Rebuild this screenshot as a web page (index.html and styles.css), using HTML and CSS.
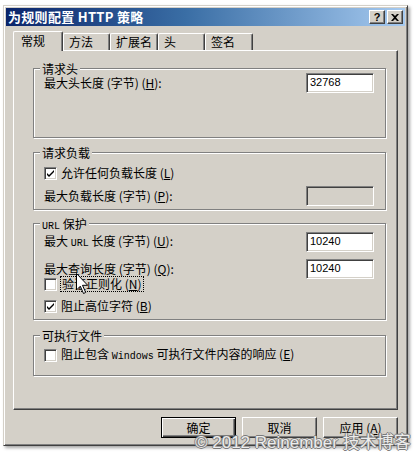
FILE: index.html
```html
<!DOCTYPE html>
<html lang="zh-CN">
<head>
    <meta charset="UTF-8">
    <title>为规则配置 HTTP 策略</title>
    <link rel="stylesheet" href="styles.css">
</head>
<body>
    <div class="window">
        <div class="titlebar">
            <span class="title">为规则配置 HTTP 策略</span>
            <div class="title-btns">
                <span class="tbtn help">?</span>
                <span class="tbtn">
                    <svg width="8" height="7" viewBox="0 0 8 7"><path d="M0 0h2l2 2 2-2h2L5 3.5 8 7H6L4 5 2 7H0l3-3.5z" fill="#000"/></svg>
                </span>
            </div>
        </div>

        <div class="dialog">
            <div class="tabs">
                <div class="tab active">常规</div>
                <div class="tab w47">方法</div>
                <div class="tab w48">扩展名</div>
                <div class="tab w47">头</div>
                <div class="tab w48">签名</div>
            </div>

            <div class="panel">
                <!-- 请求头 -->
                <div class="group g-head">
                    <div class="group-title">请求头</div>
                    <div class="row field r-head">
                        <span>最大头长度 (字节) (<u>H</u>):</span>
                        <div class="input">32768</div>
                    </div>
                </div>

                <!-- 请求负载 -->
                <div class="group g-body">
                    <div class="group-title">请求负载</div>
                    <div class="row check r-any">
                        <span class="box checked"><svg width="9" height="9" viewBox="0 0 9 9"><path d="M1 4l2 2 5-5v2L3 8 1 6z" fill="#000"/></svg></span>
                        <span>允许任何负载长度 (<u>L</u>)</span>
                    </div>
                    <div class="row field r-max">
                        <span>最大负载长度 (字节) (<u>P</u>):</span>
                        <div class="input disabled"></div>
                    </div>
                </div>

                <!-- URL 保护 -->
                <div class="group g-url">
                    <div class="group-title"><span class="mono">URL</span> 保护</div>
                    <div class="row field r-url">
                        <span>最大 <span class="mono">URL</span> 长度 (字节) (<u>U</u>):</span>
                        <div class="input">10240</div>
                    </div>
                    <div class="row field r-query">
                        <span>最大查询长度 (字节) (<u>Q</u>):</span>
                        <div class="input">10240</div>
                    </div>
                    <div class="row check r-norm">
                        <span class="box"></span>
                        <span class="focus">验证正则化 (<u>N</u>)</span>
                    </div>
                    <div class="row check r-high">
                        <span class="box checked"><svg width="9" height="9" viewBox="0 0 9 9"><path d="M1 4l2 2 5-5v2L3 8 1 6z" fill="#000"/></svg></span>
                        <span>阻止高位字符 (<u>B</u>)</span>
                    </div>
                </div>

                <!-- 可执行文件 -->
                <div class="group g-exe">
                    <div class="group-title">可执行文件</div>
                    <div class="row check r-exe">
                        <span class="box"></span>
                        <span>阻止包含 <span class="mono">Windows</span> 可执行文件内容的响应 (<u>E</u>)</span>
                    </div>
                </div>
            </div>

            <div class="buttons">
                <div class="btn default">确定</div>
                <div class="btn">取消</div>
                <div class="btn">应用 (<u>A</u>)</div>
            </div>
        </div>
    </div>

    <svg class="cursor" width="12" height="22" viewBox="0 0 12 22">
        <path d="M0.5 0.5v16.5l3.8-3.8 3.2 7.3 2.2-1-3.2-7.2h5.2z" fill="#fff" stroke="#000" stroke-width="1"/>
    </svg>
    <div class="watermark">© 2012 Reinember 技术博客</div>
</body>
</html>
```

FILE: styles.css
```css
* {
    margin: 0;
    padding: 0;
    box-sizing: border-box;
}

body {
    font-family: 'Noto Sans CJK SC', sans-serif;
    font-size: 12px;
    line-height: 14px;
    color: #000;
    background: #fff;
    width: 414px;
    height: 453px;
    overflow: hidden;
    position: relative;
}

u {
    text-decoration: underline;
}

.mono {
    font-family: 'Liberation Mono', monospace;
    font-size: 10px;
}

/* window frame */
.window {
    margin: 5px 0 0 3px;
    width: 405px;
    height: 441px;
    background: #d4d0c8;
    border: 1px solid;
    border-color: #d4d0c8 #404040 #404040 #d4d0c8;
    box-shadow: inset 1px 1px 0 #fff, inset -1px -1px 0 #808080, 2px 2px 3px rgba(0, 0, 0, 0.35);
    padding: 2px;
}

.titlebar {
    height: 18px;
    background: linear-gradient(to right, #0a246a, #3a6ea5 45%, #a6caf0);
    display: flex;
    align-items: center;
    justify-content: space-between;
    padding: 0 2px 0 2px;
}

.title {
    color: #fff;
    font-weight: bold;
    font-size: 13px;
    letter-spacing: 0.3px;
}

.title-btns {
    display: flex;
    gap: 2px;
}

.tbtn {
    width: 16px;
    height: 14px;
    background: #d4d0c8;
    border: 1px solid;
    border-color: #fff #404040 #404040 #fff;
    box-shadow: inset -1px -1px 0 #808080;
    display: flex;
    align-items: center;
    justify-content: center;
    font-family: 'Liberation Sans', sans-serif;
    font-weight: bold;
    font-size: 11px;
    line-height: 12px;
}

/* dialog body */
.dialog {
    padding: 5px 7px 0 7px;
}

.tabs {
    display: flex;
    align-items: flex-end;
    height: 19px;
}

.tab {
    height: 17px;
    border-top: 1px solid #fff;
    border-left: 1px solid #fff;
    border-right: 1px solid #404040;
    border-radius: 2px 2px 0 0;
    box-shadow: inset -1px 0 0 #808080;
    padding: 1px 0 0 5px;
    line-height: 14px;
    background: #d4d0c8;
}

.tab.w47 {
    width: 47px;
}

.tab.w48 {
    width: 48px;
}

.tab.active {
    width: 50px;
    height: 20px;
    margin-bottom: -1px;
    padding: 2px 0 0 7px;
    position: relative;
    z-index: 1;
}

.panel {
    height: 360px;
    border: 1px solid;
    border-color: #fff #404040 #404040 #fff;
    box-shadow: inset -1px -1px 0 #808080;
    padding: 17px 11px 0 19px;
}

/* group boxes */
.group {
    border: 1px solid #808080;
    box-shadow: inset 1px 1px 0 #fff, 1px 1px 0 #fff;
    padding: 0 11px 0 10px;
}

.group-title {
    width: max-content;
    height: 13px;
    line-height: 13px;
    margin: -7px 0 -6px -4px;
    padding: 0 2px;
    background: #d4d0c8;
}

.g-head { height: 70px; }
.g-body { height: 58px; margin-top: 14px; }
.g-url  { height: 97px; margin-top: 13px; }
.g-exe  { height: 41px; margin-top: 15px; }

.row {
    display: flex;
    align-items: center;
}

.row.field {
    justify-content: space-between;
    height: 20px;
}

.row.check {
    height: 14px;
    gap: 4px;
}

.r-head  { margin-top: 4px; }
.r-any   { margin-top: 13px; }
.r-max   { margin-top: 6px; }
.r-url   { margin-top: 8px; }
.r-query { margin-top: 7px; }
.r-norm  { margin-top: -2px; }
.r-high  { margin-top: 8px; }
.r-exe   { margin-top: 12px; }

.input {
    width: 68px;
    height: 20px;
    background: #fff;
    border: 1px solid;
    border-color: #808080 #fff #fff #808080;
    box-shadow: inset 1px 1px 0 #404040, inset -1px -1px 0 #d4d0c8;
    padding: 0 0 0 3px;
    font-family: 'Liberation Sans', sans-serif;
    font-size: 11px;
    line-height: 17px;
}

.input.disabled {
    background: #d4d0c8;
}

.box {
    width: 13px;
    height: 13px;
    flex: none;
    background: #fff;
    border: 1px solid;
    border-color: #808080 #fff #fff #808080;
    box-shadow: inset 1px 1px 0 #404040, inset -1px -1px 0 #d4d0c8;
    display: flex;
    align-items: center;
    justify-content: center;
}

.focus {
    outline: 1px dotted #000;
    outline-offset: 0;
    padding: 0 1px;
}

/* bottom buttons */
.buttons {
    display: flex;
    justify-content: flex-end;
    gap: 6px;
    margin-top: 7px;
}

.btn {
    width: 75px;
    height: 21px;
    border: 1px solid;
    border-color: #fff #404040 #404040 #fff;
    box-shadow: inset -1px -1px 0 #808080;
    display: flex;
    align-items: center;
    justify-content: center;
}

.btn.default {
    border-color: #000;
    box-shadow: inset 1px 1px 0 #fff, inset -1px -1px 0 #404040, inset -2px -2px 0 #808080;
}

/* overlays from the original capture */
.cursor {
    position: absolute;
    left: 76px;
    top: 273px;
}

.watermark {
    position: absolute;
    left: 195px;
    top: 433px;
    font-family: 'Liberation Sans', 'Noto Sans CJK SC', sans-serif;
    font-size: 17px;
    line-height: 19px;
    color: #ececec;
    white-space: nowrap;
    text-shadow: 1px 0 0 #7a7a7a, -1px 0 0 #7a7a7a, 0 1px 0 #7a7a7a, 0 -1px 0 #7a7a7a;
}
```
